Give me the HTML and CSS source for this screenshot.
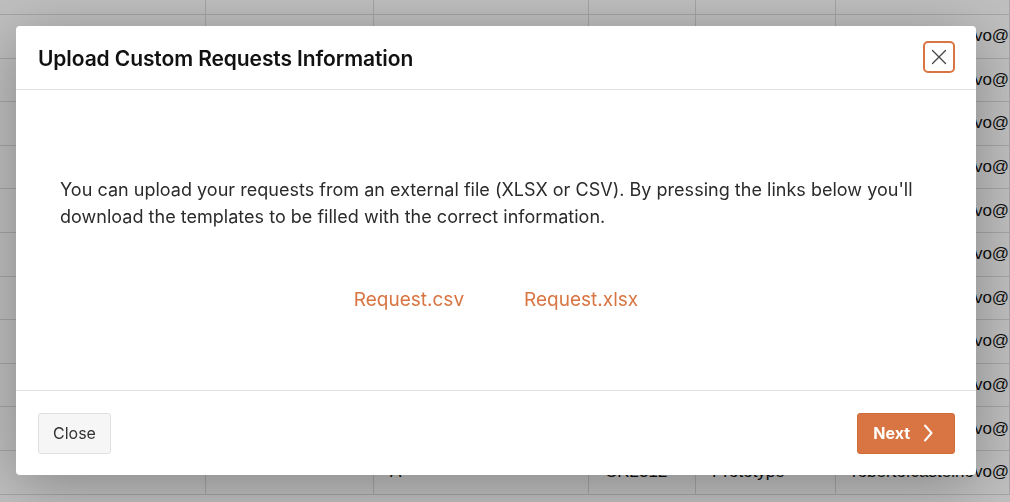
FILE: index.html
```html
<!DOCTYPE html>
<html lang="en">
<head>
    <meta charset="UTF-8" />
    <meta name="viewport" content="width=device-width, initial-scale=1.0" />
    <title>Custom Requests</title>
    <link rel="stylesheet" href="styles.css">
</head>
<body>

<div class="table" id="table"></div>
<div class="backdrop"></div>

<div class="modal">
    <div class="modal-header">
        <h2>Upload Custom Requests Information</h2>
        <button class="btn-x" aria-label="Close">
            <svg width="16" height="16" viewBox="0 0 16 16">
                <path d="M1.5 1.5 L14.5 14.5 M14.5 1.5 L1.5 14.5" stroke="#444" stroke-width="1.3" fill="none" stroke-linecap="round"/>
            </svg>
        </button>
    </div>
    <div class="modal-body">
        <p>You can upload your requests from an external file (XLSX or CSV). By pressing the links below you'll download the templates to be filled with the correct information.</p>
        <div class="links">
            <a href="#">Request.csv</a>
            <a href="#">Request.xlsx</a>
        </div>
    </div>
    <div class="modal-footer">
        <button class="btn btn-light">Close</button>
        <button class="btn btn-primary">Next
            <svg width="10" height="18" viewBox="0 0 10 18">
                <path d="M2 1.5 L8.5 9 L2 16.5" stroke="#fff" stroke-width="2" fill="none" stroke-linecap="round" stroke-linejoin="round"/>
            </svg>
        </button>
    </div>
</div>

<script>
    // Hintergrund-Tabelle füllen (nur sichtbare Teile)
    const table = document.getElementById('table');
    let html = '<div class="row head"><div></div><div></div><div></div><div></div><div></div><div></div></div>';
    for (let i = 0; i < 11; i++) {
        const last = i === 10;
        html += '<div class="row"><div></div><div></div>'
            + '<div>' + (last ? 'A' : '') + '</div>'
            + '<div>' + (last ? 'CR2312' : '') + '</div>'
            + '<div>' + (last ? 'Prototype' : '') + '</div>'
            + '<div class="mail">roberto.castelnovo@</div></div>';
    }
    table.innerHTML = html;
</script>

</body>
</html>
```

FILE: styles.css
```css
html, body { height: 100%; }
body { margin: 0; font-family: Inter, "Noto Sans", sans-serif; background: #fff; overflow: hidden; }

.table { font-family: "Liberation Sans", Arial, sans-serif; font-size: 17px; color: #111; height: 100%; overflow: hidden; }
.row {
    display: grid; grid-template-columns: 206px 168px 215px 107px 140px 1fr;
    height: 43.6px; border-bottom: 1px solid #dcdcdc; box-sizing: border-box;
}
.row.head { height: 15px; }
.row > div {
    border-right: 1px solid #dcdcdc; padding: 0 16px;
    display: flex; align-items: center; white-space: nowrap; overflow: hidden;
}
.row .mail { padding-right: 0; }
.backdrop { position: fixed; inset: 0; background: rgba(0, 0, 0, 0.25); }

.modal {
    position: fixed; left: 16px; top: 26px; width: 960px; height: 449px;
    background: #fff; border-radius: 4px;
    box-shadow: 0 10px 60px rgba(0, 0, 0, 0.3);
    display: flex; flex-direction: column;
}
.modal-header {
    height: 64px; padding: 2px 21px 0 22px; box-sizing: border-box; border-bottom: 1px solid #e3e3e3;
    display: flex; justify-content: space-between; align-items: center;
}
.modal-header h2 { margin: 0; font-size: 21px; font-weight: 600; color: #111; letter-spacing: -0.1px; }
.btn-x {
    width: 32px; height: 32px; margin-top: -3px; padding: 0;
    background: #fff; border: 2px solid #d97542; border-radius: 5px;
    display: flex; align-items: center; justify-content: center; cursor: pointer;
}
.modal-body { flex: 1; padding: 0 44px; }
.modal-body p {
    margin: 86px 0 0; font-size: 18px; line-height: 27px; color: #2b2b2b;
    letter-spacing: 0.02px;
}
.links { display: flex; justify-content: center; gap: 60px; margin-top: 56px; }
.links a { color: #d97542; text-decoration: none; font-size: 19px; line-height: 27px; }

.modal-footer {
    height: 85px; border-top: 1px solid #e3e3e3; box-sizing: border-box;
    padding: 0 21px 0 22px;
    display: flex; justify-content: space-between; align-items: center;
}
.btn {
    height: 41px; padding: 0 15px; border-radius: 3px; font-family: inherit;
    font-size: 16px; cursor: pointer; display: flex; align-items: center; gap: 13px;
}
.btn-light { background: #f6f6f6; border: 1px solid #e0e0e0; color: #333; padding: 0 14px; }
.btn-primary { background: #d97542; border: 1px solid #cf6c3a; color: #fff; font-weight: 700; padding: 0 21px 0 15px; }
```
